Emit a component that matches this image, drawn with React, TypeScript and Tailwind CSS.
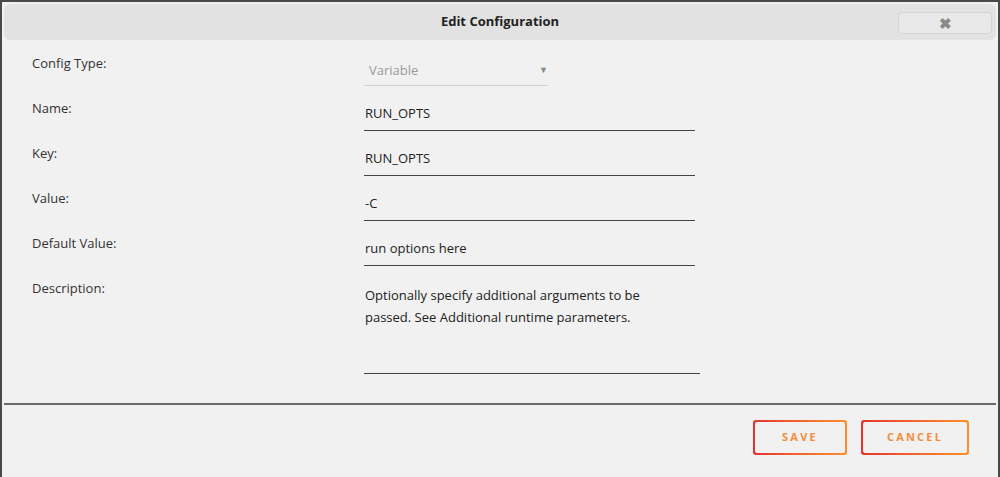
import React from "react";

const fields = [
  { label: "Name:", value: "RUN_OPTS" },
  { label: "Key:", value: "RUN_OPTS" },
  { label: "Value:", value: "-C" },
  { label: "Default Value:", value: "run options here" },
];

function Label({ children }: { children: React.ReactNode }) {
  return <div className="w-[362px] shrink-0 pl-[30px] pt-[13px] leading-[18px] text-[#333]">{children}</div>;
}

export default function App() {
  return (
    <div
      className="w-[1000px] h-[477px] overflow-hidden border-l-2 border-t-2 border-r-2 border-[#4a4a4a] bg-[#f1f1f1] text-[13px]"
      style={{ fontFamily: '"Open Sans", "Noto Sans", sans-serif' }}
    >
      {/* header */}
      <div className="relative mx-[2px] mt-[2px] h-[36px] rounded-md bg-[#e2e2e2] flex items-center justify-center">
        <span className="font-bold text-[#222] text-[13px]">Edit Configuration</span>
        <button className="absolute right-[4px] top-[8px] w-[94px] h-[22px] rounded-[4px] border border-[#d4d4d4] bg-[#e9e9e9] flex items-center justify-center text-[#8a8a8a] text-[15px] font-bold leading-none">
          ✖
        </button>
      </div>

      <div className="mt-[1px]">
        {/* config type */}
        <div className="flex h-[45px]">
          <Label>Config Type:</Label>
          <div className="w-[184px] h-[45px] border-b border-[#cfcfcf] pt-[20px] pl-[5px] flex items-start justify-between leading-[18px] text-[#9a9a9a]">
            <span>Variable</span>
            <span className="text-[9px] text-[#888] leading-[18px]">▼</span>
          </div>
        </div>

        {fields.map((f) => (
          <div key={f.label} className="flex h-[45px]">
            <Label>{f.label}</Label>
            <div className="w-[331px] h-[45px] border-b border-[#444] pt-[18px] pl-[1px] leading-[18px] text-[#222]">
              {f.value}
            </div>
          </div>
        ))}

        {/* description */}
        <div className="flex h-[108px]">
          <Label>Description:</Label>
          <div className="w-[336px] h-[108px] border-b border-[#444] pt-[18px] pl-[1px] pr-[30px] leading-[22px] text-[#222]">
            Optionally specify additional arguments to be passed. See Additional runtime parameters.
          </div>
        </div>
      </div>

      <div className="mt-[29px] mx-[2px] h-[2px] bg-[#6a6a6a]" />

      <div className="flex justify-end gap-[14px] pr-[29px] pt-[15px]">
        <div className="rounded-[3px] p-[2px] bg-gradient-to-r from-[#e52f2f] to-[#fb8f2c]">
          <button className="w-[90px] h-[31px] rounded-[2px] bg-[#f1f1f1] text-[#f48d3c] font-bold text-[11px] tracking-[0.2em]">
            SAVE
          </button>
        </div>
        <div className="rounded-[3px] p-[2px] bg-gradient-to-r from-[#e52f2f] to-[#fb8f2c]">
          <button className="w-[104px] h-[31px] rounded-[2px] bg-[#f1f1f1] text-[#f48d3c] font-bold text-[11px] tracking-[0.2em]">
            CANCEL
          </button>
        </div>
      </div>
    </div>
  );
}
